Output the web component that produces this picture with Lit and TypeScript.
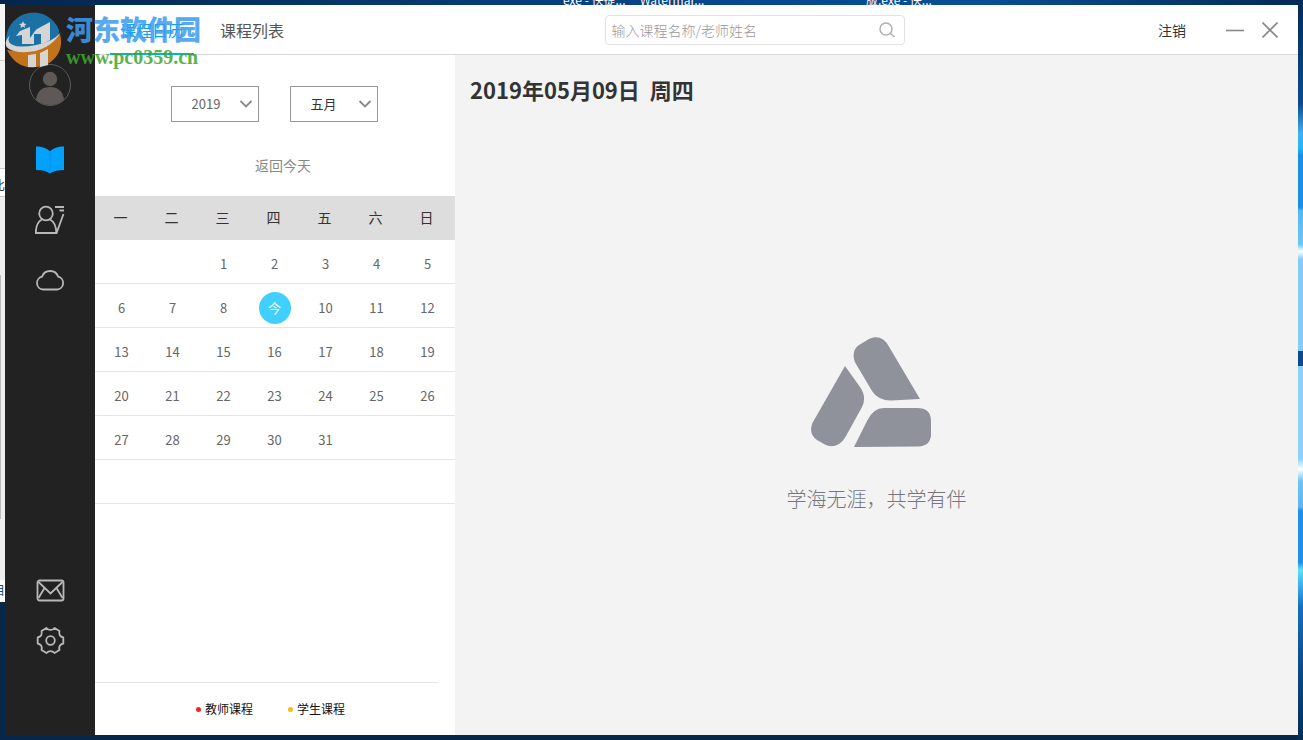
import { LitElement, html, svg, css } from "lit";
import { customElement, property, state } from "lit/decorators.js";
import { classMap } from "lit/directives/class-map.js";

const base = css`
  :host, *, *::before, *::after { box-sizing: border-box; }
  button { margin: 0; padding: 0; border: 0; background: none; font: inherit; color: inherit; cursor: pointer; }
  svg { display: block; }
`;

const icons = {
  book: svg`<path d="M1 1.500C7 1.500 12 3 15 6.500C18 3 23 1.500 29 1.500V25C23 25 18 26 15 28.500C12 26 7 25 1 25Z" fill="#00a2ff" stroke="none"/><path d="M15 7V28" stroke="#0b8ee0" stroke-width="1"/>`,
  teacher: svg`<circle cx="11" cy="8.500" r="6.800"/><path d="M7 14.500C3 16.500 .8 20.500 .8 28H21.500L28.500 9"/><path d="M15 14.500C19 16.500 21 20 21.500 28M20 2H29M24.500 5.500H29"/>`,
  cloud: svg`<path d="M8 24.500A6.500 6.500 0 0 1 7 11.700A8.600 8.600 0 0 1 23.200 11.700A6.500 6.500 0 0 1 22 24.500Z"/>`,
  mail: svg`<rect x="2.500" y="5.500" width="26" height="20" rx="2"/><path d="M3.500 7L15.500 18.500L27.500 7M3.500 23L9.500 13M27.500 23L21.500 13"/>`,
  gear: svg`<circle cx="15.500" cy="15.500" r="4.300"/><path d="M11.500 3C13.500 5.500 17.500 5.500 19.500 3L24.500 6C23.500 9.500 25 11.800 28.300 12.500V18.500C25 19.200 23.500 21.500 24.500 25L19.500 28C17.500 25.500 13.500 25.500 11.500 28L6.500 25C7.500 21.500 6 19.200 2.700 18.500V12.500C6 11.800 7.500 9.500 6.500 6Z" stroke-linejoin="round"/>`,
};

@customElement("side-bar")
class SideBar extends LitElement {
  static styles = [base, css`
    :host { display: flex; flex-direction: column; align-items: center; width: 90px; padding: 59px 0 70px; background: #222; }
    .avatar { margin-bottom: 24px; }
    nav { display: flex; flex-direction: column; align-items: stretch; width: 100%; }
    .main { flex: 1; }
    .item { display: flex; align-items: center; justify-content: center; height: 60px; }
    .low .item { height: 50px; }
    .glyph { fill: none; stroke: #b8b8b8; stroke-width: 1.8; }
  `];

  private item(label: string, icon: unknown) {
    return html`<button class="item" aria-label=${label}>
      <svg class="glyph" width="30" height="30" viewBox="0 0 30 30">${icon}</svg>
    </button>`;
  }

  render() {
    return html`
      <button class="avatar" aria-label="头像">
        <svg width="42" height="42" viewBox="0 0 42 42">
          <circle cx="21" cy="21" r="20.500" fill="none" stroke="#5a5a5a"/>
          <circle cx="21" cy="15" r="7.200" fill="#5e5957"/>
          <path d="M7 36C8 27 13 23 21 23S34 27 35 36Q29 41 21 41T7 36Z" fill="#5e5957"/>
        </svg>
      </button>
      <nav class="main">
        ${this.item("课程", icons.book)}${this.item("老师", icons.teacher)}${this.item("云盘", icons.cloud)}
      </nav>
      <nav class="low">${this.item("消息", icons.mail)}${this.item("设置", icons.gear)}</nav>
    `;
  }
}

@customElement("top-bar")
class TopBar extends LitElement {
  @state() private tab = 0;

  static styles = [base, css`
    :host { display: grid; grid-template-columns: 13fr 300px 10fr; align-items: center; height: 50px; background: #fff; border-bottom: 1px solid #d9d9d9; }
    .tabs { display: flex; gap: 16px; align-self: stretch; padding-left: 15px; }
    .tab { position: relative; padding: 0 10px; font-size: 16px; color: #555; }
    .tab.on { color: #00a8ee; }
    .tab.on::after { content: ""; position: absolute; left: 0; right: 0; bottom: -1px; height: 2px; background: #00b0ea; }
    .search { display: flex; align-items: center; height: 30px; padding: 0 8px 0 5px; border: 1px solid #e2e2e2; border-radius: 4px; }
    input { flex: 1; min-width: 0; padding: 0; border: 0; outline: 0; background: none; font: inherit; font-size: 14px; color: #333; }
    input::placeholder { color: #999; opacity: 1; font-weight: 300; }
    .actions { display: flex; align-items: center; justify-content: flex-end; gap: 18px; padding-right: 20px; }
    .logout { margin-right: 22px; font-size: 14px; color: #333; }
    .line { fill: none; stroke: #8b8885; stroke-width: 1.6; }
  `];

  render() {
    return html`
      <nav class="tabs">
        ${["课程日历", "课程列表"].map((name, i) => html`
          <button class=${classMap({ tab: true, on: this.tab === i })} @click=${() => (this.tab = i)}>${name}</button>`)}
      </nav>
      <div class="search">
        <input type="search" aria-label="搜索课程" placeholder="输入课程名称/老师姓名">
        <button aria-label="搜索">
          <svg width="18" height="18" viewBox="0 0 18 18" fill="none" stroke="#b0b0b0" stroke-width="1.500">
            <circle cx="8" cy="8" r="6"/><path d="M12.500 12.500L16.500 16"/>
          </svg>
        </button>
      </div>
      <div class="actions">
        <button class="logout">注销</button>
        <button aria-label="最小化"><svg class="line" width="18" height="18" viewBox="0 0 18 18"><path d="M0 9.500H18"/></svg></button>
        <button aria-label="关闭"><svg class="line" width="16" height="16" viewBox="0 0 16 16"><path d="M.5 .5L15.500 15.500M15.500 .5L.5 15.500"/></svg></button>
      </div>
    `;
  }
}

@customElement("month-calendar")
class MonthCalendar extends LitElement {
  @property({ type: Number }) today = 9;

  static styles = [base, css`
    :host { display: flex; flex-direction: column; width: 360px; padding-top: 31px; background: #fff; }
    .pickers { display: flex; justify-content: center; gap: 31px; padding-right: 2px; }
    .picker { display: grid; align-items: center; width: 88px; height: 36px; }
    .picker > * { grid-area: 1 / 1; }
    select { appearance: none; width: 100%; height: 100%; margin: 0; padding: 0 32px 2px 20px; border: 1px solid #999; border-radius: 0; background: #fff; font: inherit; font-size: 13px; color: #666; }
    select.month { color: #333; }
    .chevron { justify-self: end; margin-right: 6px; pointer-events: none; }
    .back { align-self: center; margin: 33px 0 21px; padding-left: 16px; font-size: 14px; line-height: 20px; color: #888; }
    table { width: 100%; table-layout: fixed; border-spacing: 0; }
    th, td { height: 44px; padding: 0; text-align: center; }
    th { width: 51px; padding-bottom: 2px; background: #ddd; font-size: 14px; font-weight: 400; color: #333; }
    th:last-child { width: auto; padding-right: 3px; }
    td { padding: 4px 0 0 2px; border-bottom: 1px solid #e6e6e6; font-size: 13px; color: #666; }
    td:last-child { padding-right: 3px; }
    .day { display: block; width: 32px; height: 32px; margin: 0 auto; border-radius: 50%; line-height: 32px; }
    .day.today { background: #41d0fd; color: #fff; }
    .legend { display: flex; justify-content: center; gap: 35px; margin: auto 17px 0 0; padding: 17px 0 17px 8px; border-top: 1px solid #e6e6e6; font-size: 12px; line-height: 18px; color: #111; }
    .key { display: flex; align-items: center; gap: 4px; }
    .dot { width: 5px; height: 5px; border-radius: 50%; background: #ee2529; }
    .dot.student { background: #f3bd16; }
  `];

  render() {
    const chevron = html`<svg class="chevron" width="14" height="10" viewBox="0 0 14 10" fill="none" stroke="#888" stroke-width="1.800"><path d="M1.500 2L7 7.500L12.500 2"/></svg>`;
    const rows = Array.from({ length: 6 }, (_, r) => Array.from({ length: 7 }, (_, c) => r * 7 + c - 1));
    return html`
      <div class="pickers">
        <div class="picker"><select aria-label="年份"><option>2019</option></select>${chevron}</div>
        <div class="picker"><select class="month" aria-label="月份"><option>五月</option></select>${chevron}</div>
      </div>
      <button class="back">返回今天</button>
      <table>
        <thead><tr>${[..."一二三四五六日"].map((d) => html`<th scope="col">${d}</th>`)}</tr></thead>
        <tbody>
          ${rows.map((row) => html`<tr>${row.map((n) => html`<td>${n > 0 && n <= 31
            ? html`<button class=${classMap({ day: true, today: n === this.today })}>${n === this.today ? "今" : n}</button>`
            : ""}</td>`)}</tr>`)}
        </tbody>
      </table>
      <div class="legend">
        <span class="key"><i class="dot"></i>教师课程</span>
        <span class="key"><i class="dot student"></i>学生课程</span>
      </div>
    `;
  }
}

@customElement("day-pane")
class DayPane extends LitElement {
  static styles = [base, css`
    :host { display: flex; flex-direction: column; flex: 1; min-width: 0; background: #f3f3f3; }
    h1 { margin: 0; padding: 16px 15px 8px; font-size: 22px; line-height: 36px; font-weight: 700; color: #333; white-space: pre; }
    .empty { flex: 1; display: flex; flex-direction: column; align-items: center; justify-content: center; gap: 38px; }
    p { margin: 0; font-size: 20px; line-height: 28px; font-weight: 300; color: #75777d; }
  `];

  render() {
    return html`
      <h1>2019年05月09日  周四</h1>
      <div class="empty">
        <svg width="132" height="110" viewBox="0 0 132 110" fill="#8f929a">
          <path d="M34 29L49 50Q56 60 51 70L35 99C30 108 22 112 13 107L6 103C-1 98-1 91 2 85Z"/>
          <path d="M45 27C41 20 42 12 48 8L58 2C66-2 73 1 77 8L109 62L80 63.500Q67 63.500 61 54Z"/>
          <path d="M43 110L56 84Q62 71 73 71H106Q120 71 120 84V97Q120 109 107 109.500Z"/>
        </svg>
        <p>学海无涯，共学有伴</p>
      </div>
    `;
  }
}

@customElement("site-stamp")
class SiteStamp extends LitElement {
  static styles = [base, css`
    :host { display: flex; gap: 5px; pointer-events: none; opacity: .85; }
    .name { font-size: 27px; line-height: 36px; font-weight: 900; color: #3d9bf0; white-space: nowrap; }
    .url { font-family: "Liberation Serif", serif; font-size: 20px; line-height: 20px; font-weight: 700; color: #3fa62e; white-space: nowrap; }
  `];

  render() {
    return html`
      <svg width="56" height="57" viewBox="0 0 56 57">
        <path d="M1 27A27.500 27.500 0 0 1 54 19Q55 31 32 35Q12 38 1 33Z" fill="#1a7fbb"/>
        <path d="M2 39Q34 44 55 23Q60 43 41 54Q14 63 2 39Z" fill="#e0801c"/>
        <path d="M5 24Q-7 38 14 41Q43 43 56 21Q48 31 31 34Q14 37 8 34Q1 31 5 24Z" fill="#f5f5f5"/>
        <path d="M15 20L25 16V33H17V24L11 25ZM32 18L45 11V29Q41 32 36 33V23H29V33H25V27L30 20ZM23 44L31 43V56H23ZM35 42L43 38V54L35 56Z" fill="#f5f5f5"/>
        <path d="M18 10L19 12.500L21.500 13L19.500 14.500L20 17L18 15.500L15.500 17L16 14.500L14 13L17 12.500Z" fill="#f5f5f5"/>
      </svg>
      <div>
        <div class="name">河东软件园</div>
        <div class="url">www.pc0359.cn</div>
      </div>
    `;
  }
}

@customElement("app-root")
class AppRoot extends LitElement {
  static styles = [base, css`
    :host {
      position: relative; display: flex; min-height: 100vh; padding: 5px; overflow: hidden;
      font-family: "Noto Sans CJK SC", sans-serif;
      background: linear-gradient(90deg, #04264d, #08478c 55%, #0a4f95 75%, #042a57) top / 100% 5px no-repeat, #06264a;
    }
    .window { position: relative; display: flex; flex: 1; min-width: 0; }
    .body { display: flex; flex-direction: column; flex: 1; min-width: 0; }
    .panes { display: flex; flex: 1; }
    .stamp { position: absolute; left: 0; top: 6px; }
    .behind { position: absolute; left: 0; top: 4px; width: 5px; height: 598px; overflow: hidden; font-size: 12px; line-height: 16px; color: #333;
      background: linear-gradient(#f6f6f6 56px, #ccc 56px 57px, #f3f3f3 57px 164px, #ccc 164px 165px, #fff 165px 192px, #ccc 192px 193px, #eee 193px 576px, #fff 576px); }
    .cut { position: absolute; left: -7px; top: 173px; }
    .cut.low { top: 578px; color: #164a86; }
    .thumb { position: absolute; left: 0; top: 271px; width: 1px; height: 244px; background: #bbb; }
    .label { position: absolute; top: -8px; font-size: 12px; line-height: 16px; color: #fff; white-space: pre; }
    .first { left: 563px; }
    .second { left: 640px; }
    .third { left: 866px; }
    .glow { position: absolute; right: 0; top: 0; bottom: 0; width: 5px;
      background: linear-gradient(#042a57, #0b4a8f 14%, #3db0f5 18%, #22b8f5 20%, #1a8fe8 21% 28%, #55b8f2 28.5%, #6cc4f5 33%, #fff 34%, #85ccf5 35% 47.4%, #0d4a8c 47.4% 49.4%, #8ed2f7 49.4% 62%, #fff 63.4%, #6cc4f5 65%, #5ab8f0 68.5%, #1e90ec 69% 76%, #5fe0f5 77%, #3db0f5 79%, #1470c0 82%, #0d4a8c 90%, #062c55); }
  `];

  render() {
    return html`
      <div class="behind"><span class="cut">比</span><span class="cut low">目</span><i class="thumb"></i></div>
      <span class="label first">exe - 快捷...</span>
      <span class="label second">Watermar...</span>
      <span class="label third">版.exe - 快...</span>
      <div class="glow"></div>
      <div class="window">
        <side-bar></side-bar>
        <div class="body">
          <top-bar></top-bar>
          <div class="panes">
            <month-calendar></month-calendar>
            <day-pane></day-pane>
          </div>
        </div>
        <site-stamp class="stamp"></site-stamp>
      </div>
    `;
  }
}
